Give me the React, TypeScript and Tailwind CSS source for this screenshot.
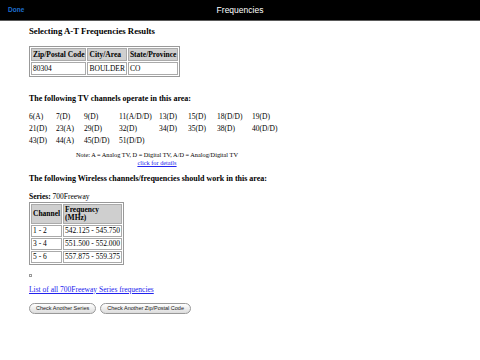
const serif = { fontFamily: '"Liberation Serif", "Times New Roman", serif' };

const channelRows = [
  ['6(A)', '7(D)', '9(D)', '11(A/D/D)', '13(D)', '15(D)', '18(D/D)', '19(D)'],
  ['21(D)', '23(A)', '29(D)', '32(D)', '34(D)', '35(D)', '38(D)', '40(D/D)'],
  ['43(D)', '44(A)', '45(D/D)', '51(D/D)', '', '', '', ''],
];

const colWidths = ['w-[27px]', 'w-[28px]', 'w-[35px]', 'w-[40px]', 'w-[29px]', 'w-[29px]', 'w-[35px]', 'w-[33px]'];

const freqRows = [
  ['1 - 2', '542.125 - 545.750'],
  ['3 - 4', '551.500 - 552.000'],
  ['5 - 6', '557.875 - 559.375'],
];

export default function App() {
  return (
    <div className="w-[480px] h-[360px] bg-white overflow-hidden">
      {/* Nav bar */}
      <div className="h-[21px] bg-black border-b border-[#5a5a5a] flex items-center relative font-['Liberation_Sans',Arial,sans-serif]">
        <span className="absolute left-[8px] text-[6.5px] font-bold text-[#1e6fd0]">Done</span>
        <span className="w-full text-center text-[8.5px] text-white">Frequencies</span>
      </div>

      <div className="pl-[29px] text-black flex flex-col items-start" style={serif}>
        <h2 className="mt-[5px] text-[8.7px] leading-[11px] font-bold">Selecting A-T Frequencies Results</h2>

        <table className="mt-[9px] border border-[#999] border-separate border-spacing-[1px] text-[7.5px] leading-[9px]">
          <thead>
            <tr className="bg-[#cfcfcf]">
              <th className="border border-[#aaa] px-[1px] py-[1px] text-left">Zip/Postal Code</th>
              <th className="border border-[#aaa] px-[1px] py-[1px] text-left">City/Area</th>
              <th className="border border-[#aaa] px-[1px] py-[1px] text-left">State/Province</th>
            </tr>
          </thead>
          <tbody>
            <tr>
              <td className="border border-[#aaa] px-[1px] py-[1px]">80304</td>
              <td className="border border-[#aaa] px-[1px] py-[1px]">BOULDER</td>
              <td className="border border-[#aaa] px-[1px] py-[1px]">CO</td>
            </tr>
          </tbody>
        </table>

        <h3 className="mt-[17px] text-[8px] leading-[10px] font-bold">The following TV channels operate in this area:</h3>

        <table className="mt-[7px] w-[256px] border-collapse text-[7.5px] leading-[12px]">
          <tbody>
            {channelRows.map((row, i) => (
              <tr key={i}>
                {row.map((c, j) => (
                  <td key={j} className={`${colWidths[j]} p-0 whitespace-nowrap`}>
                    {c}
                  </td>
                ))}
              </tr>
            ))}
            <tr>
              <td colSpan={8} className="pt-[4px] text-center text-[6.3px] leading-[8px]">
                Note: A = Analog TV, D = Digital TV, A/D = Analog/Digital TV
                <br />
                <a className="text-[#2222ee] underline">click for details</a>
              </td>
            </tr>
          </tbody>
        </table>

        <h3 className="mt-[7px] text-[8px] leading-[10px] font-bold">
          The following Wireless channels/frequencies should work in this area:
        </h3>

        <p className="mt-[8px] text-[7.5px] leading-[10px]">
          <b>Series:</b> 700Freeway
        </p>

        <table className="mt-0 border border-[#999] border-separate border-spacing-[1px] text-[7.5px] leading-[8px]">
          <thead>
            <tr className="bg-[#cfcfcf]">
              <th className="border border-[#aaa] px-[1px] py-[1px] text-left">Channel</th>
              <th className="border border-[#aaa] px-[1px] py-[1px] text-left">
                Frequency
                <br />
                (MHz)
              </th>
            </tr>
          </thead>
          <tbody>
            {freqRows.map(([ch, f]) => (
              <tr key={ch}>
                <td className="border border-[#aaa] px-[1px] py-[1px]">{ch}</td>
                <td className="border border-[#aaa] px-[1px] py-[1px] whitespace-nowrap">{f}</td>
              </tr>
            ))}
          </tbody>
        </table>

        <div className="mt-[9px] w-[3px] h-[3px] border border-[#999]" />

        <a className="mt-[8px] text-[7.5px] leading-[10px] text-[#2222ee] underline">
          List of all 700Freeway Series frequencies
        </a>

        <div className="mt-[8px] flex gap-[4px] font-['Liberation_Sans',Arial,sans-serif]">
          <button className="h-[11px] px-[6px] rounded-full border border-[#999] bg-gradient-to-b from-white to-[#dcdcdc] text-[5.5px] text-[#222] leading-none">
            Check Another Series
          </button>
          <button className="h-[11px] px-[6px] rounded-full border border-[#999] bg-gradient-to-b from-white to-[#dcdcdc] text-[5.5px] text-[#222] leading-none">
            Check Another Zip/Postal Code
          </button>
        </div>
      </div>
    </div>
  );
}
